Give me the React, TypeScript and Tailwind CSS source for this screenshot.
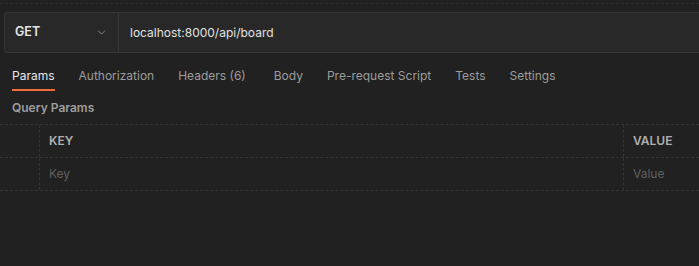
import { ChevronDown } from "lucide-react";

const tabs = [
  { label: "Params", active: true },
  { label: "Authorization" },
  { label: "Headers (6)" },
  { label: "Body", extra: true },
  { label: "Pre-request Script" },
  { label: "Tests" },
  { label: "Settings" },
];

export default function App() {
  return (
    <div
      className="w-[699px] h-[266px] overflow-hidden bg-[#212121] text-[12px] text-[#d6d6d6]"
      style={{ fontFamily: "Inter, 'Noto Sans', sans-serif" }}
    >
      {/* faint top divider */}
      <div className="h-[3px]" />
      <div className="border-t border-dashed border-[#2e2e2e]" />

      {/* Request bar */}
      <div className="pl-1 pt-2">
        <div className="flex h-[41px] rounded-l-[4px] border border-r-0 border-[#363636] bg-[#282828]">
          <div className="flex w-[114px] items-center justify-between pl-[10px] pr-[10px] border-r border-[#383838]">
            <span className="font-semibold text-[12.5px] text-[#e6e6e6]">GET</span>
            <ChevronDown size={13} strokeWidth={1.5} className="text-[#9a9a9a]" />
          </div>
          <div className="flex items-center pl-[11px] text-[#e2e2e2]">localhost:8000/api/board</div>
        </div>
      </div>

      {/* Tabs */}
      <div className="flex h-[38px] items-stretch gap-6 pl-3 pt-[10px]">
        {tabs.map((t) => (
          <div
            key={t.label}
            className={
              "flex items-center border-b-2 " +
              (t.active ? "border-[#f26b3a] text-[#e6e6e6]" : "border-transparent text-[#9c9c9c]") +
              (t.extra ? " ml-[4px]" : "")
            }
          >
            {t.label}
          </div>
        ))}
      </div>

      {/* Query Params */}
      <div className="flex h-[33px] items-center pl-3 font-semibold text-[12px] text-[#9e9e9e]">
        Query Params
      </div>

      {/* Table */}
      <div className="border-t border-dashed border-[#353535]">
        <div className="flex h-[33px] border-b border-dashed border-[#353535]">
          <div className="w-[40px] border-r border-dashed border-[#353535]" />
          <div className="flex flex-1 items-center pl-[9px] font-semibold text-[12px] text-[#b0b0b0]">KEY</div>
          <div className="flex w-[76px] items-center pl-[9px] border-l border-dashed border-[#353535] font-semibold text-[12px] text-[#b0b0b0]">
            VALUE
          </div>
        </div>
        <div className="flex h-[33px] border-b border-dashed border-[#353535]">
          <div className="w-[40px] border-r border-dashed border-[#353535]" />
          <div className="flex flex-1 items-center pl-[9px] text-[12px] text-[#5f5f5f]">Key</div>
          <div className="flex w-[76px] items-center pl-[9px] border-l border-dashed border-[#353535] text-[12px] text-[#5f5f5f]">
            Value
          </div>
        </div>
      </div>
    </div>
  );
}
